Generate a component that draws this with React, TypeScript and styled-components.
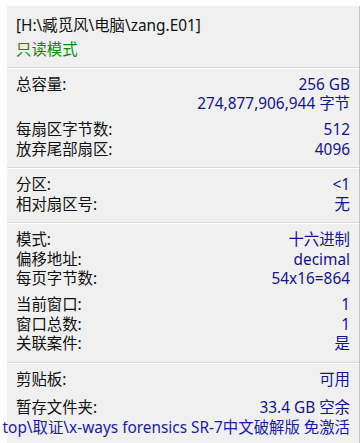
import { createGlobalStyle } from "styled-components";
import styled from "styled-components";

const Global = createGlobalStyle`
  html, body {
    margin: 0;
    padding: 0;
    background: #ffffff;
    overflow: hidden;
  }
  body {
    font-family: "Noto Sans", "Noto Sans CJK SC", sans-serif;
    font-size: 15.4px;
  }
`;

const Frame = styled.div`
  width: 361px;
  height: 443px;
  padding: 6px 1px 0 7px;
  box-sizing: border-box;
  display: flex;
`;

const Panel = styled.div`
  flex: 1;
  min-width: 0;
  background: #f0f0f0;
  border-right: 1px solid #c4c4c4;
  display: flex;
  flex-direction: column;
`;

const Section = styled.div<{ $top?: number; $bottom?: number }>`
  display: flex;
  flex-direction: column;
  min-width: 0;
  padding: ${(p) => p.$top ?? 7}px 9px ${(p) => p.$bottom ?? 8}px 9px;
  & + & {
    border-top: 1px solid #d7d7d7;
    box-shadow: inset 0 1px 0 #ffffff;
  }
`;

const Row = styled.div<{ $gap?: number }>`
  display: flex;
  justify-content: space-between;
  align-items: center;
  height: 19.5px;
  line-height: 19.5px;
  margin-top: ${(p) => p.$gap ?? 0}px;
  white-space: nowrap;
`;

const Label = styled.span`
  color: #111111;
`;

const Value = styled.span`
  color: #14148c;
`;

const Line = styled.div<{ $green?: boolean; $gap?: number }>`
  height: 19.5px;
  line-height: 19.5px;
  margin-top: ${(p) => p.$gap ?? 0}px;
  color: ${(p) => (p.$green ? "#0c8a0c" : "#111111")};
  white-space: nowrap;
`;

const Overflow = styled.div`
  display: flex;
  justify-content: flex-end;
  min-width: 0;
  height: 19.5px;
  line-height: 19.5px;
  margin-top: 1px;
  white-space: nowrap;
  color: #1a1aa6;
`;

type Item = { label?: string; value: string; gap?: number };

const groups: Item[][] = [
  [
    { label: "总容量:", value: "256 GB" },
    { value: "274,877,906,944 字节" },
    { label: "每扇区字节数:", value: "512", gap: 6.5 },
    { label: "放弃尾部扇区:", value: "4096" },
  ],
  [
    { label: "分区:", value: "<1" },
    { label: "相对扇区号:", value: "无" },
  ],
  [
    { label: "模式:", value: "十六进制" },
    { label: "偏移地址:", value: "decimal" },
    { label: "每页字节数:", value: "54x16=864" },
    { label: "当前窗口:", value: "1", gap: 6.5 },
    { label: "窗口总数:", value: "1" },
    { label: "关联案件:", value: "是" },
  ],
];

export default function App() {
  return (
    <>
      <Global />
      <Frame>
        <Panel>
          <Section $top={10} $bottom={7}>
            <Line>[H:\臧觅风\电脑\zang.E01]</Line>
            <Line $green $gap={4.5}>只读模式</Line>
          </Section>
          {groups.map((g, i) => (
            <Section key={i}>
              {g.map((it, j) => (
                <Row key={j} $gap={it.gap}>
                  <Label>{it.label ?? ""}</Label>
                  <Value>{it.value}</Value>
                </Row>
              ))}
            </Section>
          ))}
          <Section>
            <Row>
              <Label>剪贴板:</Label>
              <Value>可用</Value>
            </Row>
            <Row $gap={8.5}>
              <Label>暂存文件夹:</Label>
              <Value>33.4 GB 空余</Value>
            </Row>
            <Overflow>top\取证\x-ways forensics SR-7中文破解版 免激活</Overflow>
          </Section>
        </Panel>
      </Frame>
    </>
  );
}
